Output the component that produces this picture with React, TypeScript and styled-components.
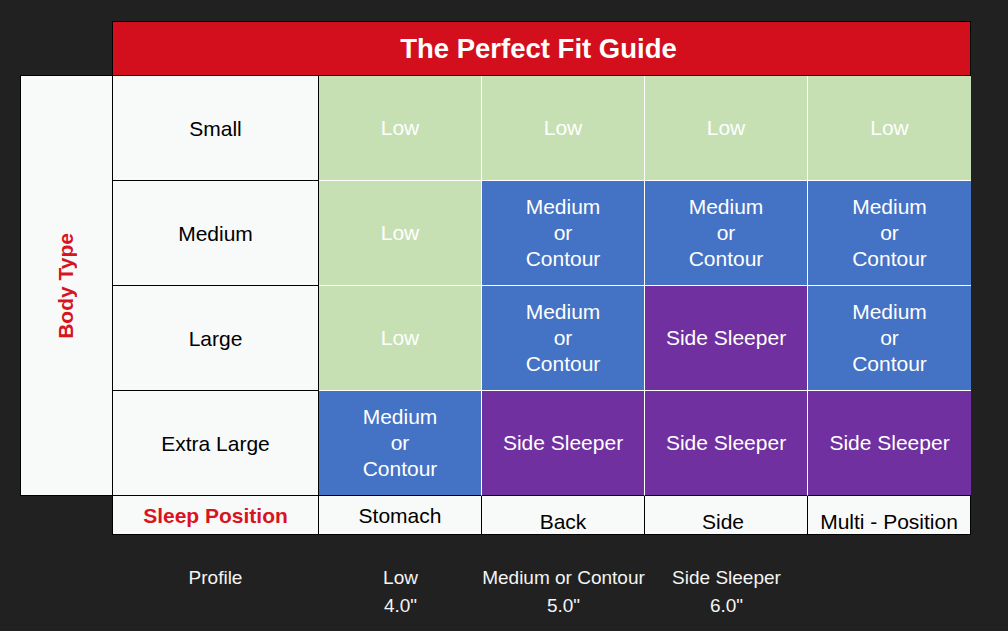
import React from 'react';
import styled, { createGlobalStyle } from 'styled-components';

type Fit = 'low' | 'medium' | 'side';

const GlobalStyle = createGlobalStyle`
  html, body {
    margin: 0;
    padding: 0;
    background: #212121;
    font-family: "Liberation Sans", Arial, sans-serif;
  }
`;

const fitColors: Record<Fit, string> = {
  low: '#c6e0b4',
  medium: '#4472c4',
  side: '#7030a0',
};

const Page = styled.div`
  width: 1008px;
  height: 631px;
  padding: 21px 0 0 20px;
  box-sizing: border-box;
`;

const Chart = styled.div`
  display: grid;
  grid-template-columns: 92px 207px repeat(4, 163px);
  grid-template-rows: 55px repeat(4, 105px) 39px auto;
`;

const Title = styled.div`
  grid-column: 2 / 7;
  grid-row: 1;
  background: #d30f1d;
  border: 1px solid #000;
  box-sizing: border-box;
  display: flex;
  align-items: center;
  justify-content: center;
  padding-right: 6px;
  color: #fff;
  font-weight: 700;
  font-size: 27.5px;
`;

const BodyTypeBox = styled.div`
  grid-column: 1;
  grid-row: 2 / 6;
  margin-top: -1px;
  background: #f8f9f9;
  border: 1px solid #000;
  border-right: none;
  box-sizing: border-box;
  display: flex;
  align-items: center;
  justify-content: center;
`;

const BodyTypeText = styled.span`
  writing-mode: vertical-rl;
  transform: rotate(180deg);
  color: #d7141f;
  font-weight: 700;
  font-size: 21px;
  padding-left: 2px;
`;

const LabelCell = styled.div<{ $row: number }>`
  grid-column: 2;
  grid-row: ${p => p.$row};
  background: #f8f9f9;
  border-left: 1px solid #000;
  border-right: 1px solid #000;
  border-bottom: 1px solid #000;
  box-sizing: border-box;
  display: flex;
  align-items: center;
  justify-content: center;
  padding-top: 2px;
  color: #000;
  font-size: 21px;
`;

const FitCell = styled.div<{ $fit: Fit; $last: boolean; $bottom: boolean }>`
  background: ${p => fitColors[p.$fit]};
  border-right: ${p => (p.$last ? 'none' : '1px solid #fff')};
  border-bottom: 1px solid ${p => (p.$bottom ? '#000' : '#fff')};
  box-sizing: border-box;
  display: flex;
  flex-direction: column;
  align-items: center;
  justify-content: center;
  color: #fff;
  font-size: 21px;
  line-height: 26px;
  text-align: center;
`;

const SleepLabel = styled(LabelCell)`
  color: #d7141f;
  font-weight: 700;
`;

const PositionCell = styled.div<{ $drop: boolean; $shift: number }>`
  grid-row: 6;
  background: #f8f9f9;
  border-right: 1px solid #000;
  border-bottom: 1px solid #000;
  box-sizing: border-box;
  display: flex;
  align-items: center;
  justify-content: center;
  padding-top: ${p => (p.$drop ? '13px' : '2px')};
  padding-right: ${p => p.$shift}px;
  color: #000;
  font-size: 21px;
`;

const ProfileCell = styled.div`
  grid-row: 7;
  padding-top: 29px;
  color: #f4f4f4;
  font-size: 19px;
  line-height: 28px;
  text-align: center;
`;

const rows: { label: string; cells: Fit[] }[] = [
  { label: 'Small', cells: ['low', 'low', 'low', 'low'] },
  { label: 'Medium', cells: ['low', 'medium', 'medium', 'medium'] },
  { label: 'Large', cells: ['low', 'medium', 'side', 'medium'] },
  { label: 'Extra Large', cells: ['medium', 'side', 'side', 'side'] },
];

const positions = [
  { name: 'Stomach', shift: 0 },
  { name: 'Back', shift: 0 },
  { name: 'Side', shift: 6 },
  { name: 'Multi - Position', shift: 0 },
];

const profiles = [
  ['Profile'],
  ['Low', '4.0"'],
  ['Medium or Contour', '5.0"'],
  ['Side Sleeper', '6.0"'],
];

const FitText: React.FC<{ fit: Fit }> = ({ fit }) => {
  if (fit === 'low') return <span>Low</span>;
  if (fit === 'side') return <span>Side Sleeper</span>;
  return (
    <>
      <span>Medium</span>
      <span>or</span>
      <span>Contour</span>
    </>
  );
};

const App: React.FC = () => {
  return (
    <Page>
      <GlobalStyle />
      <Chart>
        <Title>The Perfect Fit Guide</Title>
        <BodyTypeBox>
          <BodyTypeText>Body Type</BodyTypeText>
        </BodyTypeBox>

        {rows.map((row, r) => (
          <React.Fragment key={row.label}>
            <LabelCell $row={r + 2}>{row.label}</LabelCell>
            {row.cells.map((fit, c) => (
              <FitCell
                key={c}
                $fit={fit}
                $last={c === 3}
                $bottom={r === 3}
                style={{ gridRow: r + 2, gridColumn: c + 3 }}
              >
                <FitText fit={fit} />
              </FitCell>
            ))}
          </React.Fragment>
        ))}

        <SleepLabel $row={6}>Sleep Position</SleepLabel>
        {positions.map((pos, i) => (
          <PositionCell
            key={pos.name}
            $drop={i > 0}
            $shift={pos.shift}
            style={{ gridColumn: i + 3 }}
          >
            {pos.name}
          </PositionCell>
        ))}

        {profiles.map((lines, i) => (
          <ProfileCell key={i} style={{ gridColumn: i + 2 }}>
            {lines.map(line => (
              <div key={line}>{line}</div>
            ))}
          </ProfileCell>
        ))}
      </Chart>
    </Page>
  );
};

export default App;
